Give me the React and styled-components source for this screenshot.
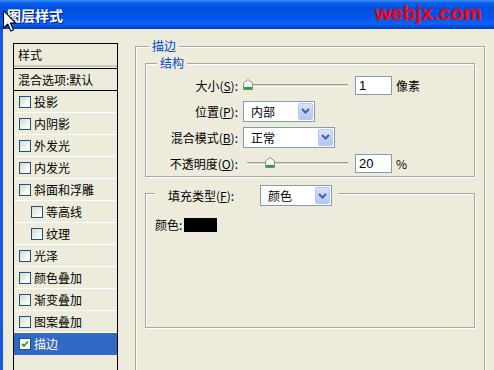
import styled, { createGlobalStyle } from 'styled-components';

const GlobalStyle = createGlobalStyle`
  html, body {
    margin: 0;
    padding: 0;
    background: #edecdc;
    overflow: hidden;
  }
  * { box-sizing: border-box; }
`;

const FONT = `"Noto Sans CJK SC", "Noto Sans", sans-serif`;

const Window = styled.div`
  position: relative;
  width: 494px;
  height: 370px;
  overflow: hidden;
  background: #edecdc;
  font-family: ${FONT};
  font-size: 12px;
  color: #000;
`;

const TitleBar = styled.div`
  height: 29px;
  display: flex;
  align-items: center;
  justify-content: space-between;
  padding: 0 12px 0 7px;
  background: linear-gradient(
    to bottom,
    #3c8cf8 0px,
    #0a5fea 3px,
    #0050e0 8px,
    #0055e8 18px,
    #0a64f5 24px,
    #0048d0 27px,
    #003cb8 29px
  );
`;

const Title = styled.div`
  color: #fff;
  font-weight: 700;
  font-size: 14px;
  letter-spacing: 0px;
  text-shadow: 1px 1px 0 #0a1e6e;
`;

const Watermark = styled.div`
  color: #ff0000;
  font-family: "Liberation Sans", Arial, sans-serif;
  font-weight: 700;
  font-size: 21px;
  line-height: 1;
  margin-top: -4px;
`;

const Body = styled.div`
  display: flex;
  align-items: flex-start;
  gap: 17px;
  height: 341px;
  padding: 14px 0 0 10px;
  border-left: 3px solid #1b55e0;
`;

const StyleList = styled.div`
  width: 105px;
  height: 340px;
  border: 1px solid #000;
  border-bottom: none;
  display: flex;
  flex-direction: column;
`;

const ListHead = styled.div`
  height: 21px;
  display: flex;
  align-items: center;
  padding-left: 4px;
`;

const HeadRule = styled.div`
  height: 4px;
  border-top: 2px solid #c9c7ba;
  border-bottom: 1px solid #000;
`;

const BlendRow = styled.div`
  height: 22px;
  display: flex;
  align-items: center;
  padding-left: 4px;
  border-bottom: 1px solid #000;
`;

const ListRow = styled.div`
  height: 22px;
  display: flex;
  align-items: center;
  gap: 3px;
  padding-left: ${(p) => (p.$indent ? 17 : 5)}px;
  border-bottom: 1px solid ${(p) => (p.$selected ? '#316ac5' : '#ffffff')};
  background: ${(p) => (p.$selected ? '#316ac5' : 'transparent')};
  color: ${(p) => (p.$selected ? '#fff' : '#000')};
`;

const CheckBox = styled.span`
  width: 12px;
  height: 12px;
  flex: none;
  border: 1px solid #1c5180;
  background: ${(p) =>
    p.$checked ? '#fff' : 'linear-gradient(135deg, #d8d7d0 0%, #f3f3ef 60%, #ffffff 100%)'};
  display: inline-flex;
  align-items: center;
  justify-content: center;
`;

const Outer = styled.div`
  position: relative;
  width: 350px;
  height: 340px;
  margin-top: 3px;
  padding: 16px 9px 0 9px;
  border: 1px solid #aca899;
  box-shadow: inset 1px 1px 0 #fff, 1px 1px 0 #fff;
  display: flex;
  flex-direction: column;
  gap: 16px;
`;

const Group = styled.div`
  position: relative;
  height: ${(p) => p.$h}px;
  border: 1px solid #aca899;
  box-shadow: inset 1px 1px 0 #fff, 1px 1px 0 #fff;
  padding: ${(p) => p.$pad};
`;

const Caption = styled.div`
  position: absolute;
  top: ${(p) => p.$top}px;
  left: ${(p) => p.$left}px;
  padding: 0 3px;
  background: #edecdc;
  color: #0046d5;
  line-height: 14px;
`;

const FillCaption = styled.div`
  position: absolute;
  top: -9px;
  left: 9px;
  display: flex;
  align-items: center;
  padding: 0 6px 0 13px;
  background: #edecdc;
`;

const FillLabel = styled.span`
  width: 92px;
`;

const Form = styled.div`
  display: grid;
  grid-template-columns: 92px 1fr;
  grid-auto-rows: 22px;
  row-gap: 4px;
  column-gap: 5px;
  align-items: center;
`;

const Label = styled.span`
  text-align: right;
  white-space: nowrap;
`;

const Controls = styled.div`
  display: flex;
  align-items: center;
  gap: 7px;
`;

const Unit = styled.span`
  margin-left: -3px;
`;

const SliderBox = styled.div`
  position: relative;
  width: 105px;
  height: 22px;
  display: flex;
  align-items: center;
`;

const Track = styled.div`
  width: 100%;
  height: 3px;
  margin-left: ${(p) => p.$inset}px;
  border-top: 1px solid #9d9a8d;
  background: #dcd9cd;
  border-bottom: 1px solid #fff;
`;

const Thumb = styled.svg`
  position: absolute;
  top: 5px;
`;

const NumInput = styled.div`
  width: 37px;
  height: 19px;
  border: 1px solid #7f9db9;
  background: #fff;
  padding-left: 3px;
  display: flex;
  align-items: center;
  font-family: "Liberation Sans", Arial, sans-serif;
  font-size: 13px;
`;

const Select = styled.div`
  width: ${(p) => p.$w}px;
  height: 21px;
  border: 1px solid #7f9db9;
  background: #fff;
  display: flex;
  align-items: center;
  justify-content: space-between;
  padding: 1px 1px 1px 7px;
`;

const DropBtn = styled.span`
  width: 15px;
  height: 17px;
  border-radius: 2px;
  border: 1px solid #b6c7f2;
  background: linear-gradient(to bottom, #dbe4fd 0%, #c3d3fb 45%, #b2c6f6 100%);
  display: flex;
  align-items: center;
  justify-content: center;
`;

const ColorRow = styled.div`
  display: flex;
  align-items: center;
  gap: 2px;
`;

const Swatch = styled.span`
  width: 33px;
  height: 14px;
  background: #000;
`;

const Cursor = styled.svg`
  position: absolute;
  left: 3px;
  top: 10px;
`;

const Chevron = () => (
  <svg width="9" height="6" viewBox="0 0 9 6">
    <path d="M1 1 L4.5 4.5 L8 1" fill="none" stroke="#4d6185" strokeWidth="2" />
  </svg>
);

const Dropdown = ({ w, children }) => (
  <Select $w={w}>
    <span>{children}</span>
    <DropBtn>
      <Chevron />
    </DropBtn>
  </Select>
);

const Slider = ({ value, max, inset = 0 }) => {
  const left = inset + Math.round((value / max) * (105 - inset - 9));
  return (
    <SliderBox>
      <Track $inset={inset} />
      <Thumb width="10" height="11" viewBox="0 0 10 11" style={{ left }}>
        <path d="M0.5 4 L5 0.5 L9.5 4 V10.5 H0.5 Z" fill="#f7f7f2" stroke="#8c8c84" />
        <rect x="1" y="8" width="8" height="2.5" fill="#2aa33a" />
      </Thumb>
    </SliderBox>
  );
};

const effects = [
  { name: '投影' },
  { name: '内阴影' },
  { name: '外发光' },
  { name: '内发光' },
  { name: '斜面和浮雕' },
  { name: '等高线', indent: true },
  { name: '纹理', indent: true },
  { name: '光泽' },
  { name: '颜色叠加' },
  { name: '渐变叠加' },
  { name: '图案叠加' },
  { name: '描边', checked: true, selected: true },
];

export default function App() {
  return (
    <Window>
      <GlobalStyle />
      <TitleBar>
        <Title>图层样式</Title>
        <Watermark>webjx.com</Watermark>
      </TitleBar>

      <Body>
        <StyleList>
          <ListHead>样式</ListHead>
          <HeadRule />
          <BlendRow>混合选项:默认</BlendRow>
          {effects.map((e) => (
            <ListRow key={e.name} $indent={e.indent} $selected={e.selected}>
              <CheckBox $checked={e.checked}>
                {e.checked && (
                  <svg width="8" height="8" viewBox="0 0 8 8">
                    <path d="M1 4 L3 6 L7 1.5" fill="none" stroke="#21a121" strokeWidth="1.8" />
                  </svg>
                )}
              </CheckBox>
              <span>{e.name}</span>
            </ListRow>
          ))}
        </StyleList>

        <Outer>
          <Caption $top={-8} $left={13}>描边</Caption>

          <Group $h={114} $pad="10px 0 0 0">
            <Caption $top={-8} $left={11}>结构</Caption>
            <Form>
              <Label>大小(<u>S</u>):</Label>
              <Controls>
                <Slider value={1} max={250} />
                <NumInput>1</NumInput>
                <Unit>像素</Unit>
              </Controls>

              <Label>位置(<u>P</u>):</Label>
              <Controls>
                <Dropdown w={72}>内部</Dropdown>
              </Controls>

              <Label>混合模式(<u>B</u>):</Label>
              <Controls>
                <Dropdown w={92}>正常</Dropdown>
              </Controls>

              <Label>不透明度(<u>O</u>):</Label>
              <Controls>
                <Slider value={20} max={100} inset={4} />
                <NumInput>20</NumInput>
                <Unit>%</Unit>
              </Controls>
            </Form>
          </Group>

          <Group $h={135} $pad="22px 0 0 9px">
            <FillCaption>
              <FillLabel>填充类型(<u>F</u>):</FillLabel>
              <Dropdown w={72}>颜色</Dropdown>
            </FillCaption>
            <ColorRow>
              <span>颜色:</span>
              <Swatch />
            </ColorRow>
          </Group>
        </Outer>
      </Body>

      <Cursor width="13" height="22" viewBox="0 0 12 20">
        <path
          d="M0.5 0.5 L0.5 16.5 L4.3 12.8 L7.2 19.3 L9.6 18.2 L6.8 11.8 L11.5 11.8 Z"
          fill="#fff"
          stroke="#000"
          strokeWidth="1"
          strokeLinejoin="round"
        />
      </Cursor>
    </Window>
  );
}
